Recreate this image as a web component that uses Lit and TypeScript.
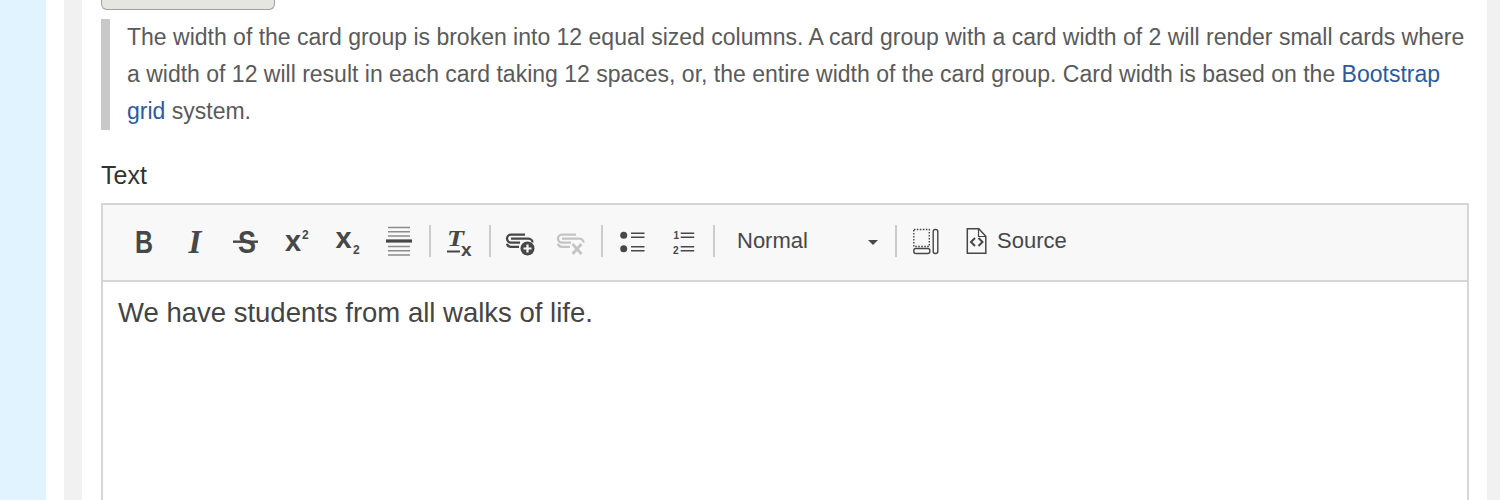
import { LitElement, html, css, svg } from "lit";
import { customElement } from "lit/decorators.js";

const icon = (w: number, body: unknown, x0 = 0) => html`<svg class="ic" width=${w} height="32" viewBox="${x0} 225 ${w} 32">${body}</svg>`;

const chain = (c: string) => svg`<g fill="none" stroke=${c} stroke-width="2.3">
  <path d="M527 234.600h-14a4 4 0 0 0 0 8h9"/><path d="M513 238.600h17.500a4 4 0 0 1 4 4"/><path d="M521 246.800h-8a4 4 0 0 1-4-3"/>
</g>`;

@customElement("app-root")
export class AppRoot extends LitElement {
  static styles = css`
    :host { display: block; width: 1500px; height: 500px; overflow: hidden; background: #fff; font-family: "Liberation Sans", Arial, sans-serif; }
    .page { display: flex; height: 500px; }
    .side { width: 46px; background: #e1f3fe; flex: none; }
    .gutter { width: 18px; flex: none; }
    .rail { width: 18px; background: #f1f1f1; flex: none; }
    .main { flex: 1; padding: 0 19px; min-width: 0; }
    .rail.end { width: 13px; }
    .btn { width: 174px; height: 10px; box-sizing: border-box; background: #e6e6e0; border: 1px solid #a2a29c; border-top: 0; border-radius: 0 0 6px 6px; }
    .quote { margin: 9px 0 0; border-left: 9px solid #c8c8c8; padding-left: 17px; font-size: 23px; line-height: 37px; color: #5a5a5a; white-space: nowrap; }
    .quote a { color: #2c5a9c; text-decoration: none; }
    .label { margin-top: 28px; font-size: 25px; line-height: 34px; color: #333; }
    .editor { margin-top: 11px; width: 1368px; box-sizing: border-box; height: 400px; border: 2px solid #d6d6d6; }
    .toolbar { height: 72px; background: #f8f8f8; border-bottom: 2px solid #d6d6d6; display: flex; align-items: center; padding: 0 0 3px 15px; box-sizing: content-box; color: #474747; font-size: 22px; }
    .b { width: 51px; display: flex; justify-content: center; flex: none; }
    .b.w { width: 50px; }
    .sep { width: 2px; height: 32px; background: #cbcbcb; margin: 0 4px 0 4px; flex: none; }
    .sep.first { margin-left: 5px; }
    .ic { display: block; overflow: visible; }
    .combo { width: 172px; flex: none; display: flex; align-items: center; justify-content: space-between; padding: 0 13px 0 18px; box-sizing: border-box; }
    .tri { width: 0; height: 0; border: 5px solid transparent; border-top-color: #474747; border-bottom: 0; margin-top: 2px; }
    .src { display: flex; align-items: center; gap: 10px; margin-left: 15px; }
    .body { padding: 12px 15px; font-size: 27.5px; line-height: 37px; color: #444; white-space: nowrap; }
    text { font-family: "Liberation Sans", Arial, sans-serif; fill: #474747; }
    .serif { font-family: "Liberation Serif", serif; }
  `;

  render() {
    return html`<div class="page">
      <div class="side"></div><div class="gutter"></div><div class="rail"></div>
      <div class="main">
        <div class="btn"></div>
        <div class="quote">The width of the card group is broken into 12 equal sized columns. A card group with a card width of 2 will render small cards where<br>a width of 12 will result in each card taking 12 spaces, or, the entire width of the card group. Card width is based on the <a>Bootstrap<br>grid</a> system.</div>
        <div class="label">Text</div>
        <div class="editor">
          <div class="toolbar">
            <div class="b">${icon(30, svg`<text x="144" y="253" text-anchor="middle" font-size="32" font-weight="700" textLength="18" lengthAdjust="spacingAndGlyphs">B</text>`, 129)}</div>
            <div class="b">${icon(30, svg`<text class="serif" x="193" y="253" text-anchor="middle" font-size="33" font-weight="700" font-style="italic">I</text>`, 178)}</div>
            <div class="b">${icon(30, svg`<text x="248" y="253" text-anchor="middle" font-size="31" font-weight="700" textLength="18" lengthAdjust="spacingAndGlyphs">S</text><rect x="234" y="240.5" width="25" height="2.4" fill="#474747"/>`, 232)}</div>
            <div class="b">${icon(30, svg`<text x="286" y="251" font-size="29" font-weight="700">x</text><text x="303" y="239" font-size="12" font-weight="700">2</text>`, 283)}</div>
            <div class="b">${icon(30, svg`<text x="336.500" y="248" font-size="29" font-weight="700">x</text><text x="354" y="254" font-size="12" font-weight="700">2</text>`, 334)}</div>
            <div class="b">${icon(30, svg`<path d="M389 227.5h22M389 231.7h22M389 236h22M389 246.5h22M389 250.7h22M389 255h22" stroke="#8c8c8c" stroke-width="1.6"/><path d="M387 241h26" stroke="#474747" stroke-width="3.2"/>`, 385)}</div>
            <div class="sep first"></div>
            <div class="b w">${icon(30, svg`<text class="serif" x="447" y="246" font-size="24" font-weight="700" font-style="italic" textLength="17" lengthAdjust="spacingAndGlyphs">T</text><path d="M447 251.5h13" stroke="#474747" stroke-width="2"/><text x="461" y="256" font-size="19" font-weight="700">x</text>`, 445)}</div>
            <div class="sep"></div>
            <div class="b">${icon(34, svg`${chain("#474747")}<circle cx="529.5" cy="248.5" r="7" fill="#474747"/><path d="M525.5 248.5h8M529.5 244.5v8" stroke="#f8f8f8" stroke-width="2.2"/>`, 506)}</div>
            <div class="b">${icon(34, svg`<g transform="translate(51 0)">${chain("#c4c4c4")}</g><path d="M574.5 244l9 10M583.5 244l-9 10" stroke="#c4c4c4" stroke-width="2.8"/>`, 557)}</div>
            <div class="sep"></div>
            <div class="b">${icon(30, svg`<circle cx="625.7" cy="235.3" r="3.5" fill="#474747"/><circle cx="625.7" cy="248.7" r="3.5" fill="#474747"/><path d="M633 233.3h13.5M633 237.3h13.5M633 246.7h13.5M633 250.7h13.5" stroke="#474747" stroke-width="1.6"/>`, 620)}</div>
            <div class="b">${icon(30, svg`<text x="674.5" y="239" font-size="10" font-weight="700">1</text><text x="674" y="254" font-size="10" font-weight="700">2</text><path d="M681.7 233.3h13.5M681.7 237.3h13.5M681.7 246.7h13.5M681.7 250.7h13.5" stroke="#474747" stroke-width="1.6"/>`, 670)}</div>
            <div class="sep"></div>
            <div class="combo"><span>Normal</span><span class="tri"></span></div>
            <div class="sep"></div>
            <div class="b w">${icon(30, svg`<rect x="913.8" y="229.5" width="15.5" height="17" fill="none" stroke="#474747" stroke-width="1.4" stroke-dasharray="1.6 1.4"/><rect x="913.8" y="248.5" width="16" height="5" rx="2" fill="none" stroke="#474747" stroke-width="1.4"/><rect x="933.2" y="229.5" width="4.6" height="24" rx="2" fill="none" stroke="#474747" stroke-width="1.4"/>`, 911)}</div>
            <div class="src">
              ${icon(21, svg`<path d="M967.8 228.7h11.5l7 7.5v17h-18.500z" fill="none" stroke="#474747" stroke-width="1.5"/><path d="M979 229v7.500h7" fill="none" stroke="#474747" stroke-width="1.200"/><path d="M975.500 238l-4 4 4 4M979 238l4 4-4 4" fill="none" stroke="#474747" stroke-width="2"/>`, 966.500)}
              <span>Source</span>
            </div>
          </div>
          <div class="body">We have students from all walks of life.</div>
        </div>
      </div>
      <div class="rail end"></div>
    </div>`;
  }
}
